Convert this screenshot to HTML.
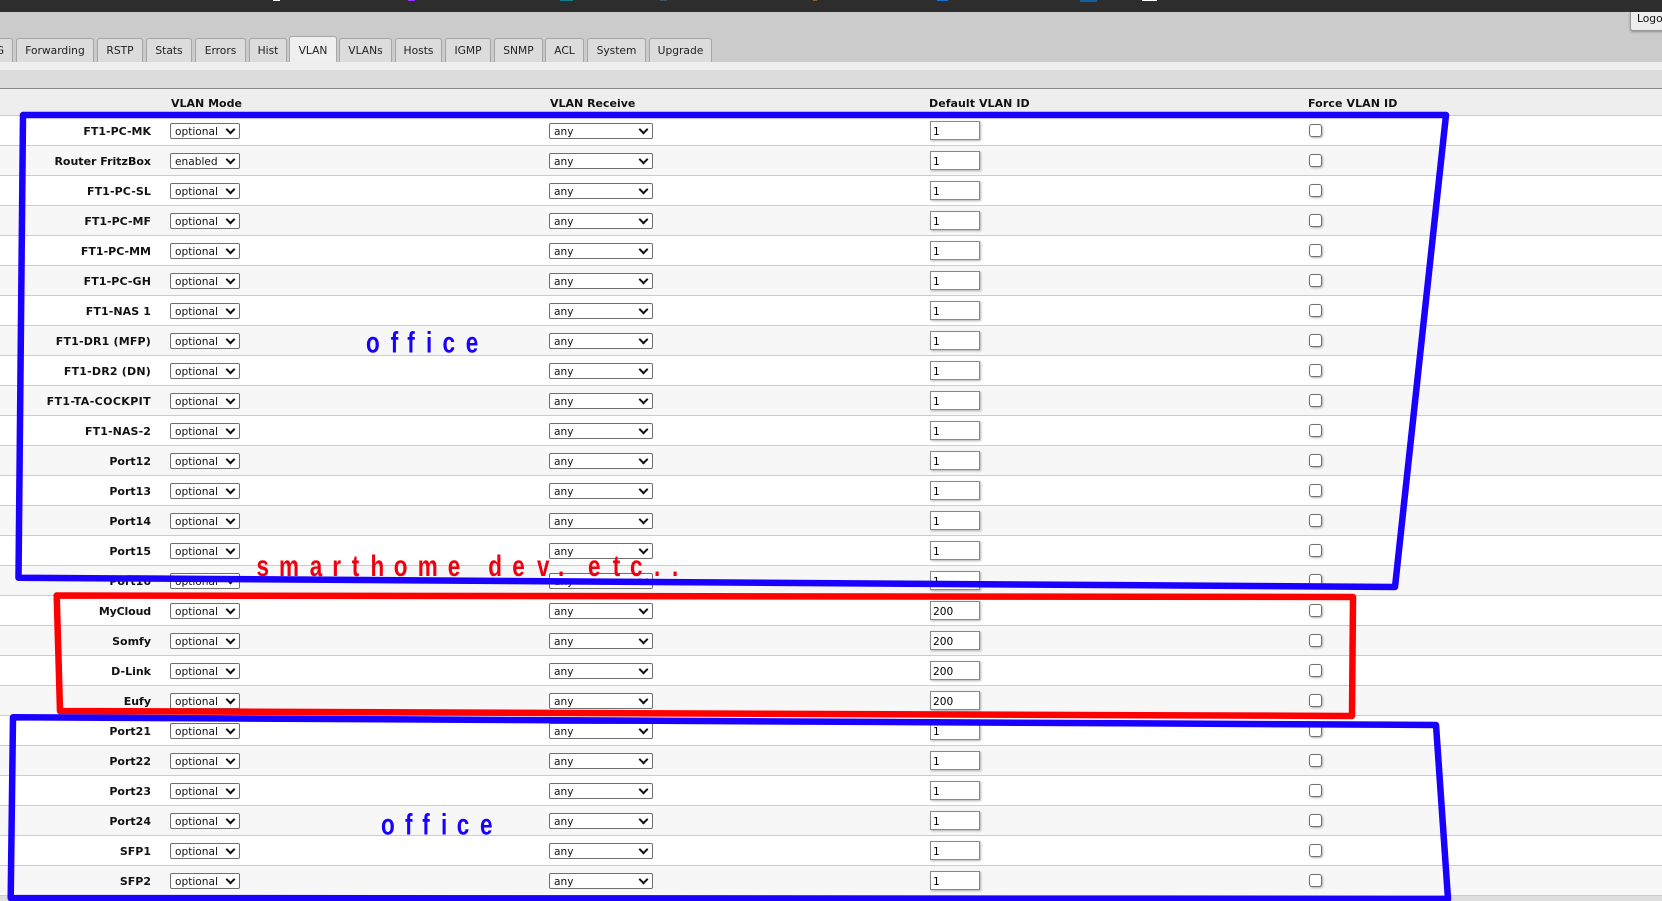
<!DOCTYPE html>
<html lang="en">
<head>
<meta charset="utf-8">
<title>VLAN</title>
<style>
html,body{margin:0;padding:0;width:1662px;height:901px;overflow:hidden;background:#ddd}
body{position:relative;font-family:"DejaVu Sans","Liberation Sans",sans-serif;font-size:10.7px;color:#111}
#top{position:absolute;left:0;top:0;width:1662px;height:12px;background:#2d2d2d}
#top u{position:absolute;top:0;height:1px;display:block}
#nav{position:absolute;left:0;top:12px;width:1662px;height:50px;background:#cbcbcb}
#logout{position:absolute;left:1630px;top:12px;width:60px;height:18px;background:#eee;border:1px solid #999;border-top:0;border-radius:0 0 0 3px;box-shadow:0 1px 2px rgba(0,0,0,.3);line-height:14px;padding-left:6px;box-sizing:content-box}
.t{position:absolute;top:38px;height:24px;box-sizing:border-box;background:#dcdcdc;border:1px solid #a6a6a6;border-bottom:0;border-radius:3px 3px 0 0;text-align:center;line-height:23px;white-space:nowrap;color:#222}
.t.a{top:36px;height:26px;background:#efefef;line-height:27px}
#s1{position:absolute;left:0;top:62px;width:1662px;height:8px;background:#eee}
#s2{position:absolute;left:0;top:70px;width:1662px;height:18px;background:#dcdcdc;border-bottom:1px solid #888}
#hd{position:absolute;left:0;top:89px;width:1662px;height:26px;background:#eee;border-bottom:1px solid #ccc;font-weight:bold;line-height:30px;font-size:11px;color:#111}
#hd span{position:absolute;top:0}
#rows{position:absolute;left:0;top:116px;width:1662px}
.r{position:relative;height:30px;box-sizing:border-box;background:#fff;border-bottom:1px solid #ccc}
.r:nth-child(even){background:#f7f7f7}
.r b{position:absolute;right:1511px;top:9px;font-size:11px;line-height:14px;white-space:nowrap;color:#111}
.m,.v{position:absolute;top:7px;height:16px;display:block}
.m{left:170px;width:70px}
.v{left:549px;width:104px}
.m:after,.v:after{content:"";position:absolute;top:2.5px;width:5px;height:5px;border-right:2px solid #111;border-bottom:2px solid #111;transform:rotate(45deg);pointer-events:none}
.m:after{right:6px}
.v:after{right:6.5px}
select{appearance:none;-webkit-appearance:none;display:block;width:100%;height:16px;box-sizing:border-box;border:1px solid #6f6f6f;border-radius:2px;background:#fff;padding:2px 0 0 4px;margin:0;font:10.6px "DejaVu Sans","Liberation Sans",sans-serif;color:#111}
.d{position:absolute;left:930px;top:5px;width:50px;height:19px;box-sizing:border-box;border:1px solid #888;background:#fff;padding:2px 0 0 2px;margin:0;font:10.6px "DejaVu Sans","Liberation Sans",sans-serif;color:#000;box-shadow:1px 1px 2px rgba(0,0,0,.3);outline:0}
.c{appearance:none;-webkit-appearance:none;position:absolute;left:1309px;top:8px;width:13px;height:13px;box-sizing:border-box;margin:0;border:1px solid #707070;border-radius:3px;background:#fff;box-shadow:1px 1px 2px rgba(0,0,0,.3)}
#ov{position:absolute;left:0;top:0;width:1662px;height:901px}
#ov text{font-family:"Liberation Sans",Arial,sans-serif;font-weight:bold;font-size:30px}
</style>
</head>
<body>
<div id="top">
<u style="left:273px;width:7px;background:#fff"></u>
<u style="left:408px;width:7px;background:#9b30ff"></u>
<u style="left:560px;width:13px;background:#0e7f8a"></u>
<u style="left:660px;width:7px;background:#3f5566"></u>
<u style="left:813px;width:4px;background:#8a6030"></u>
<u style="left:937px;width:11px;background:#1873d3"></u>
<u style="left:1080px;width:17px;height:2px;background:#125f9e"></u>
<u style="left:1142px;width:15px;background:#fff"></u>
</div>
<div id="nav"></div>
<div id="logout">Logout</div>
<div class="t" style="left:-40px;width:53px;text-align:right;padding-right:8px">IG</div>
<div class="t" style="left:16px;width:78px">Forwarding</div>
<div class="t" style="left:97px;width:46px">RSTP</div>
<div class="t" style="left:146px;width:46px">Stats</div>
<div class="t" style="left:195px;width:51px">Errors</div>
<div class="t" style="left:249px;width:38px">Hist</div>
<div class="t a" style="left:289px;width:48px">VLAN</div>
<div class="t" style="left:339px;width:53px">VLANs</div>
<div class="t" style="left:395px;width:47px">Hosts</div>
<div class="t" style="left:445px;width:46px">IGMP</div>
<div class="t" style="left:494px;width:49px">SNMP</div>
<div class="t" style="left:545px;width:39px">ACL</div>
<div class="t" style="left:587px;width:59px">System</div>
<div class="t" style="left:649px;width:63px">Upgrade</div>
<div id="s1"></div>
<div id="s2"></div>
<div id="hd"><span style="left:171px">VLAN Mode</span><span style="left:550px">VLAN Receive</span><span style="left:929px;letter-spacing:.06px">Default VLAN ID</span><span style="left:1308px;letter-spacing:.1px">Force VLAN ID</span></div>
<div id="rows">
<div class="r"><b>FT1-PC-MK</b><i class="m"><select><option>optional</option></select></i><i class="v"><select><option>any</option></select></i><input class="d" value="1"><input class="c" type="checkbox"></div>
<div class="r"><b>Router FritzBox</b><i class="m"><select><option>enabled</option></select></i><i class="v"><select><option>any</option></select></i><input class="d" value="1"><input class="c" type="checkbox"></div>
<div class="r"><b style="letter-spacing:.1px">FT1-PC-SL</b><i class="m"><select><option>optional</option></select></i><i class="v"><select><option>any</option></select></i><input class="d" value="1"><input class="c" type="checkbox"></div>
<div class="r"><b>FT1-PC-MF</b><i class="m"><select><option>optional</option></select></i><i class="v"><select><option>any</option></select></i><input class="d" value="1"><input class="c" type="checkbox"></div>
<div class="r"><b>FT1-PC-MM</b><i class="m"><select><option>optional</option></select></i><i class="v"><select><option>any</option></select></i><input class="d" value="1"><input class="c" type="checkbox"></div>
<div class="r"><b style="letter-spacing:.1px">FT1-PC-GH</b><i class="m"><select><option>optional</option></select></i><i class="v"><select><option>any</option></select></i><input class="d" value="1"><input class="c" type="checkbox"></div>
<div class="r"><b style="letter-spacing:.1px">FT1-NAS 1</b><i class="m"><select><option>optional</option></select></i><i class="v"><select><option>any</option></select></i><input class="d" value="1"><input class="c" type="checkbox"></div>
<div class="r"><b style="letter-spacing:.18px">FT1-DR1 (MFP)</b><i class="m"><select><option>optional</option></select></i><i class="v"><select><option>any</option></select></i><input class="d" value="1"><input class="c" type="checkbox"></div>
<div class="r"><b style="letter-spacing:.2px">FT1-DR2 (DN)</b><i class="m"><select><option>optional</option></select></i><i class="v"><select><option>any</option></select></i><input class="d" value="1"><input class="c" type="checkbox"></div>
<div class="r"><b style="letter-spacing:.38px">FT1-TA-COCKPIT</b><i class="m"><select><option>optional</option></select></i><i class="v"><select><option>any</option></select></i><input class="d" value="1"><input class="c" type="checkbox"></div>
<div class="r"><b style="letter-spacing:.1px">FT1-NAS-2</b><i class="m"><select><option>optional</option></select></i><i class="v"><select><option>any</option></select></i><input class="d" value="1"><input class="c" type="checkbox"></div>
<div class="r"><b>Port12</b><i class="m"><select><option>optional</option></select></i><i class="v"><select><option>any</option></select></i><input class="d" value="1"><input class="c" type="checkbox"></div>
<div class="r"><b>Port13</b><i class="m"><select><option>optional</option></select></i><i class="v"><select><option>any</option></select></i><input class="d" value="1"><input class="c" type="checkbox"></div>
<div class="r"><b>Port14</b><i class="m"><select><option>optional</option></select></i><i class="v"><select><option>any</option></select></i><input class="d" value="1"><input class="c" type="checkbox"></div>
<div class="r"><b>Port15</b><i class="m"><select><option>optional</option></select></i><i class="v"><select><option>any</option></select></i><input class="d" value="1"><input class="c" type="checkbox"></div>
<div class="r"><b>Port16</b><i class="m"><select><option>optional</option></select></i><i class="v"><select><option>any</option></select></i><input class="d" value="1"><input class="c" type="checkbox"></div>
<div class="r"><b style="letter-spacing:-.15px">MyCloud</b><i class="m"><select><option>optional</option></select></i><i class="v"><select><option>any</option></select></i><input class="d" value="200"><input class="c" type="checkbox"></div>
<div class="r"><b>Somfy</b><i class="m"><select><option>optional</option></select></i><i class="v"><select><option>any</option></select></i><input class="d" value="200"><input class="c" type="checkbox"></div>
<div class="r"><b>D-Link</b><i class="m"><select><option>optional</option></select></i><i class="v"><select><option>any</option></select></i><input class="d" value="200"><input class="c" type="checkbox"></div>
<div class="r"><b>Eufy</b><i class="m"><select><option>optional</option></select></i><i class="v"><select><option>any</option></select></i><input class="d" value="200"><input class="c" type="checkbox"></div>
<div class="r"><b>Port21</b><i class="m"><select><option>optional</option></select></i><i class="v"><select><option>any</option></select></i><input class="d" value="1"><input class="c" type="checkbox"></div>
<div class="r"><b>Port22</b><i class="m"><select><option>optional</option></select></i><i class="v"><select><option>any</option></select></i><input class="d" value="1"><input class="c" type="checkbox"></div>
<div class="r"><b>Port23</b><i class="m"><select><option>optional</option></select></i><i class="v"><select><option>any</option></select></i><input class="d" value="1"><input class="c" type="checkbox"></div>
<div class="r"><b>Port24</b><i class="m"><select><option>optional</option></select></i><i class="v"><select><option>any</option></select></i><input class="d" value="1"><input class="c" type="checkbox"></div>
<div class="r"><b>SFP1</b><i class="m"><select><option>optional</option></select></i><i class="v"><select><option>any</option></select></i><input class="d" value="1"><input class="c" type="checkbox"></div>
<div class="r"><b>SFP2</b><i class="m"><select><option>optional</option></select></i><i class="v"><select><option>any</option></select></i><input class="d" value="1"><input class="c" type="checkbox"></div>
</div>
<svg id="ov" viewBox="0 0 1662 901" xmlns="http://www.w3.org/2000/svg">
<path d="M23 115 L1446 115 L1395 587 L18.5 577.7 Z" fill="none" stroke="#1a00ff" stroke-width="6.5" stroke-linejoin="round"/>
<path d="M56.7 595.5 L1353 597 L1352 716 L60 711 Z" fill="none" stroke="#ff0000" stroke-width="6.5" stroke-linejoin="round"/>
<path d="M13 717.3 L1436 725 L1448 899 L10.7 898 Z" fill="none" stroke="#1a00ff" stroke-width="6.5" stroke-linejoin="round"/>
<text transform="scale(.75 1)" y="352.5" fill="#1a00ff" x="488 521 543 568 590 621">office</text>
<text transform="scale(.75 1)" y="834.5" fill="#1a00ff" x="508 540 563 588 609 640">office</text>
<text transform="scale(.75 1)" y="576" fill="#ee0011" x="342 372 413 443 469 494 525 557 597 635 651 683 716 744 765 784 817 840 872 896">smarthome dev. etc..</text>
</svg>
</body>
</html>
